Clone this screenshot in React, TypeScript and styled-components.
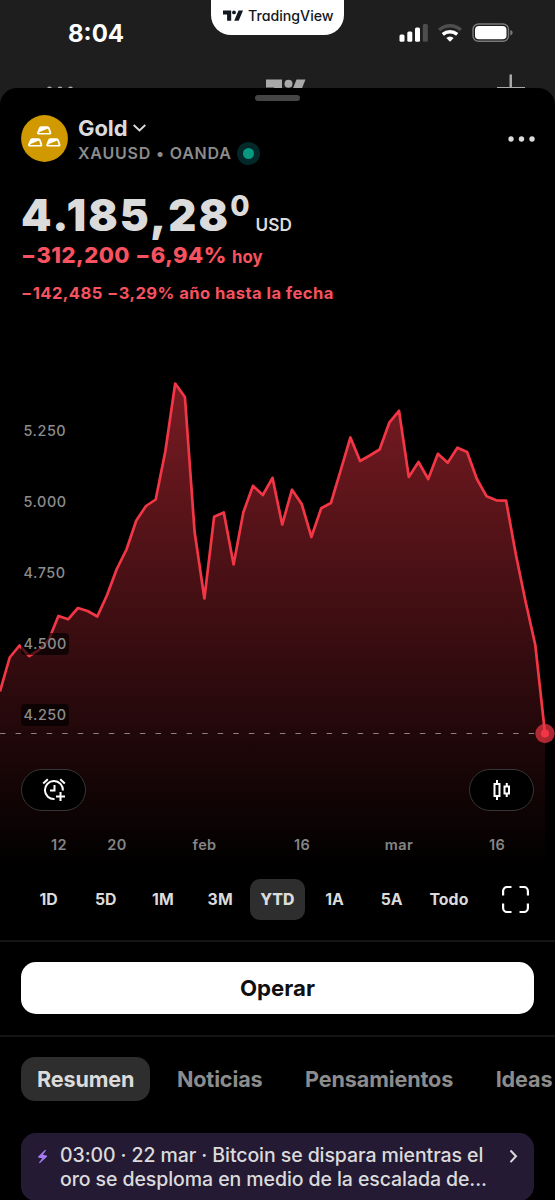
import React from "react";
import styled, { createGlobalStyle } from "styled-components";

const Global = createGlobalStyle`
  * { box-sizing: border-box; }
  html, body { margin: 0; background: #000; }
  body { font-family: Inter, "Liberation Sans", sans-serif; color: #dbdbdb; }
  button { font-family: inherit; color: inherit; border: 0; background: none; padding: 0; margin: 0; }
`;

const Screen = styled.main`
  width: 555px;
  height: 1200px;
  overflow: hidden;
  background: #1e1e1e;
  display: flex;
  flex-direction: column;
`;

const StatusBar = styled.header`
  height: 88px;
  flex: none;
  position: relative;
  display: flex;
  justify-content: space-between;
  align-items: flex-start;
  padding: 0 42px 0 68px;
`;

const Clock = styled.div`
  font-size: 24px;
  line-height: 30px;
  font-weight: 700;
  color: #fff;
  margin-top: 19px;
`;

const BrandPill = styled.div`
  position: absolute;
  left: 211px;
  top: 0;
  width: 133px;
  height: 35px;
  border-radius: 0 0 20px 20px;
  background: #fff;
  color: #131722;
  display: flex;
  align-items: flex-start;
  padding: 8px 0 0 12px;
  gap: 5px;
  font-size: 14.2px;
  line-height: 16px;
  font-weight: 500;
  font-feature-settings: "cv11";
`;

const StatusIcons = styled.svg`
  margin-top: 20px;
  display: block;
`;

const BackdropNav = styled.svg`
  position: absolute;
  left: 0;
  top: 70px;
`;

const Sheet = styled.section`
  flex: 1;
  min-height: 0;
  background: #000;
  border-radius: 17px 17px 0 0;
  display: flex;
  flex-direction: column;
  position: relative;
`;

const Grabber = styled.div`
  flex: none;
  width: 45px;
  height: 6px;
  border-radius: 3px;
  background: #454545;
  margin: 7px auto 14px;
`;

const SymbolRow = styled.div`
  display: flex;
  align-items: center;
  height: 47px;
  padding: 0 20px 0 21px;
  gap: 10px;
`;

const SymbolInfo = styled.div`
  flex: 1;
  display: flex;
  flex-direction: column;
  padding-top: 3px;
`;

const SymbolName = styled.div`
  display: flex;
  align-items: center;
  gap: 6px;
  font-size: 22px;
  line-height: 26px;
  font-weight: 700;
  letter-spacing: -0.1px;
`;

const SymbolMeta = styled.div`
  display: flex;
  align-items: center;
  gap: 5px;
  color: #8c8c8c;
  font-size: 16px;
  line-height: 25px;
  font-weight: 600;
  letter-spacing: 0.8px;
`;

const MarketDot = styled.span`
  width: 23px;
  height: 23px;
  border-radius: 50%;
  background: #04282a;
  display: flex;
  align-items: center;
  justify-content: center;
  &::after {
    content: "";
    width: 11px;
    height: 11px;
    border-radius: 50%;
    background: #089981;
  }
`;

const Quote = styled.div`
  height: 148px;
  padding: 28px 21px 0;
  display: flex;
  flex-direction: column;
`;

const Price = styled.div`
  display: flex;
  align-items: baseline;
  height: 53px;
  font-size: 43.5px;
  line-height: 50px;
  font-weight: 900;
  letter-spacing: 2.1px;
`;

const Fraction = styled.span`
  font-size: 28px;
  line-height: 28px;
  position: relative;
  top: -15px;
  letter-spacing: 0;
  font-weight: 800;
`;

const Currency = styled.span`
  font-size: 17.2px;
  line-height: 24px;
  font-weight: 600;
  letter-spacing: 0;
  margin-left: 6px;
`;

const Change = styled.div<{ $size: number; $line: number; $track: number; $bold?: boolean }>`
  color: #f7525f;
  font-size: ${(p) => p.$size}px;
  line-height: ${(p) => p.$line}px;
  letter-spacing: ${(p) => p.$track}px;
  font-weight: ${(p) => (p.$bold ? 800 : 700)};
  white-space: nowrap;
  small {
    font-size: 16.8px;
    font-weight: 700;
    letter-spacing: 0;
  }
`;

const ChartArea = styled.div`
  position: relative;
  height: 569px;
  svg { display: block; }
`;

const ChartButton = styled.button<{ $side: "left" | "right" }>`
  position: absolute;
  top: 459px;
  ${(p) => p.$side}: 21px;
  width: 65px;
  height: 42px;
  border: 1px solid #363636;
  border-radius: 21px;
  background: #000;
  display: flex;
  align-items: center;
  justify-content: center;
`;

const Ranges = styled.nav`
  display: flex;
  height: 41px;
  padding: 0 26px 0 20px;
  align-items: center;
`;

const Range = styled.button<{ $active?: boolean }>`
  width: 57.2px;
  flex: none;
  display: flex;
  justify-content: center;
  span {
    min-width: 55px;
    height: 41px;
    border-radius: 10px;
    background: ${(p) => (p.$active ? "#2e2e2e" : "transparent")};
    font-size: 15.8px;
    line-height: 41px;
    font-weight: ${(p) => (p.$active ? 800 : 700)};
    letter-spacing: 0.1px;
  }
`;

const FullscreenButton = styled.button`
  margin-left: auto;
  display: flex;
`;

const TradePanel = styled.div`
  margin-top: 20px;
  border: solid #151515;
  border-width: 2px 0;
  padding: 20px 21px 21px;
  height: 97px;
`;

const TradeButton = styled.button`
  width: 100%;
  height: 52px;
  border-radius: 15px;
  background: #fff;
  color: #0f0f0f;
  font-size: 22.2px;
  line-height: 52px;
  font-weight: 700;
  display: block;
`;

const Tabs = styled.nav`
  display: flex;
  margin-top: 20px;
  padding-left: 21px;
  gap: 10.5px;
  overflow: hidden;
  flex: none;
`;

const Tab = styled.button<{ $active?: boolean }>`
  flex: none;
  height: 44px;
  padding: 0 16px;
  border-radius: 14px;
  background: ${(p) => (p.$active ? "#2e2e2e" : "transparent")};
  color: ${(p) => (p.$active ? "#dbdbdb" : "#8c8c8c")};
  font-size: 21.6px;
  line-height: 45px;
  font-weight: 700;
  letter-spacing: -0.13px;
`;

const NewsCard = styled.article`
  flex: none;
  height: 68px;
  margin: 32px 21px 0;
  border-radius: 15px;
  background: #251a34;
  display: flex;
  padding: 10px 16px 0;
  svg { flex: none; }
`;

const NewsText = styled.p`
  margin: 1px 0 0 12px;
  flex: 1;
  font-size: 19.5px;
  line-height: 23.5px;
  font-weight: 500;
  letter-spacing: -0.08px;
  white-space: nowrap;
`;

const STEP = 545 / 56;
const CHART_TOP = 310;
const series = [
  691.5, 657.5, 645.5, 656, 650, 640, 616, 619.3, 608, 611, 616.5, 595, 569, 549.5, 520.5, 506, 499.5, 451, 383.5, 397,
  532, 598.5, 516.8, 512.5, 564.5, 512.5, 485.8, 495, 477.8, 524.6, 489.7, 504, 537, 508.3, 503, 470.7, 437.5, 461,
  455.5, 449.5, 422.7, 410.8, 477, 462, 479, 453.8, 462.8, 447.7, 452, 479, 496.3, 500.3, 500.7, 554.3, 601.3, 645,
  733.3,
];
const points = series.map((y, i) => `${(i * STEP).toFixed(1)},${(y - CHART_TOP).toFixed(1)}`).join(" ");

const priceTicks = [
  { label: "5.250", y: 121 },
  { label: "5.000", y: 192 },
  { label: "4.750", y: 263 },
  { label: "4.500", y: 334, plate: true },
  { label: "4.250", y: 405, plate: true },
];
const dateTicks = [
  { label: "12", x: 59 },
  { label: "20", x: 117 },
  { label: "feb", x: 204.5 },
  { label: "16", x: 302 },
  { label: "mar", x: 399 },
  { label: "16", x: 497 },
];

function PriceChart() {
  return (
    <svg width="555" height="569" viewBox="0 0 555 569">
      <defs>
        <linearGradient id="fill" x1="0" y1="73" x2="0" y2="558" gradientUnits="userSpaceOnUse">
          <stop offset="0" stopColor="#f23645" stopOpacity="0.5" />
          <stop offset="1" stopColor="#f23645" stopOpacity="0" />
        </linearGradient>
      </defs>
      <polygon points={`0,558 ${points} 545,558`} fill="url(#fill)" />
      <polyline points={points} fill="none" stroke="#f23645" strokeWidth="2.7" strokeLinejoin="round" />
      <line x1="0" x2="537" y1="423.5" y2="423.5" stroke="#8c8080" strokeWidth="1" strokeDasharray="5.5 10.05" />
      <circle cx="545" cy="423.5" r="9.7" fill="#f23645" fillOpacity="0.7" />
      <circle cx="545" cy="423.5" r="4" fill="#f23645" />
      {priceTicks.map((t) => (
        <g key={t.label}>
          {t.plate && <rect x="21" y={t.y - 11} width="48" height="22" rx="4" fill="#000" fillOpacity="0.65" />}
          <text x="23.5" y={t.y + 5.4} fontSize="14.4" fontWeight="500" letterSpacing="0.55" fill="#8c8c8c">
            {t.label}
          </text>
        </g>
      ))}
      {dateTicks.map((t) => (
        <text key={t.x} x={t.x} y="540.4" fontSize="14.5" fontWeight="600" letterSpacing="0.4" textAnchor="middle" fill="#858585">
          {t.label}
        </text>
      ))}
    </svg>
  );
}

const ingots = [
  [15.8, 11],
  [6.8, 23],
  [25, 23],
];

function GoldIcon() {
  return (
    <svg width="47" height="47" viewBox="0 0 47 47">
      <circle cx="23.5" cy="23.5" r="23.4" fill="#d19900" />
      {ingots.map(([x, y]) => (
        <g key={x}>
          <path d={`M${x + 4.2} ${y + 1}h6.600q1 0 1.300 1l1.600 4.600q.3 1.200-.9 1.200H${x + 2}q-1.300 0-.9-1.200l1.800-4.600q.3-1 1.300-1z`} fill="#fff" stroke="#fff" strokeWidth="1.500" strokeLinejoin="round" />
          <path d={`M${x + 2.4} ${y + 7}l.3-.9 8-3.300q.5-.2.700.4l1.100 3.300q.1.500-.4.500z`} fill="#d19900" />
        </g>
      ))}
    </svg>
  );
}

export default function App() {
  return (
    <Screen>
      <Global />
      <StatusBar>
        <Clock>8:04</Clock>
        <BrandPill>
          <svg width="20" height="16" viewBox="0 0 20 16" fill="#131722">
            <path d="M0 2.500h8.200v10.300H4.100V6.500H0z" />
            <circle cx="11" cy="4.400" r="1.900" />
            <path d="M15.500 2.500h4.500l-4.300 10.300h-4.500z" />
          </svg>
          TradingView
        </BrandPill>
        <StatusIcons width="114" height="26" viewBox="399 20 114 26">
          <g fill="#fff">
            <rect x="399.500" y="34.500" width="5" height="7.300" rx="1.500" />
            <rect x="407.300" y="31.500" width="5" height="10.300" rx="1.500" />
            <rect x="415" y="27.500" width="5" height="14.300" rx="1.500" />
            <rect x="422.800" y="24" width="5" height="17.800" rx="1.500" fill="#4e4e4e" />
          </g>
          <path d="M439.200 30a16 16 0 0 1 21.600 0" fill="none" stroke="#4e4e4e" strokeWidth="3.600" />
          <path d="M442.800 34.400a11.200 11.200 0 0 1 14.400 0" fill="none" stroke="#fff" strokeWidth="3.400" />
          <path d="M446.300 38a5.800 5.800 0 0 1 7.400 0L450 41.800z" fill="#fff" />
          <rect x="473" y="24" width="35.500" height="17.300" rx="5.500" fill="none" stroke="#7a7a7a" strokeWidth="1.400" />
          <rect x="475" y="26" width="31.500" height="13.300" rx="3.800" fill="#fff" />
          <path d="M510.300 30v5.500q2.400-.8 2.400-2.750t-2.400-2.750z" fill="#7a7a7a" />
        </StatusIcons>
        <BackdropNav width="555" height="36" viewBox="0 70 555 36" fill="#a9a9a9">
          <circle cx="49.500" cy="89" r="2.500" />
          <circle cx="60" cy="89" r="2.500" />
          <circle cx="70.500" cy="89" r="2.500" />
          <path d="M266 79.500h16v20h-8v-12h-8z" />
          <circle cx="288.500" cy="83.700" r="4" />
          <path d="M296.500 79.500h9l-8 20h-9z" />
          <path d="M509.500 74.500h2.500v12.500h13v2h-28v-2h12.500z" />
        </BackdropNav>
      </StatusBar>
      <Sheet>
        <Grabber />
        <SymbolRow>
          <GoldIcon />
          <SymbolInfo>
            <SymbolName>
              Gold
              <svg width="13" height="8" viewBox="0 0 13 8" fill="none" stroke="#dbdbdb" strokeWidth="1.900">
                <path d="M.7 1l5.800 5.400L12.300 1" />
              </svg>
            </SymbolName>
            <SymbolMeta>
              XAUUSD • OANDA <MarketDot />
            </SymbolMeta>
          </SymbolInfo>
          <svg width="27" height="6" viewBox="0 0 27 6" fill="#dbdbdb">
            <circle cx="3" cy="3" r="2.700" />
            <circle cx="13.500" cy="3" r="2.700" />
            <circle cx="24" cy="3" r="2.700" />
          </svg>
        </SymbolRow>
        <Quote>
          <Price>
            4.185,28<Fraction>0</Fraction>
            <Currency>USD</Currency>
          </Price>
          <Change $size={22} $line={31} $track={0.45} $bold>
            −312,200 −6,94% <small>hoy</small>
          </Change>
          <Change $size={16.6} $line={41} $track={0.43}>
            −142,485 −3,29% año hasta la fecha
          </Change>
        </Quote>
        <ChartArea>
          <PriceChart />
          <ChartButton $side="left">
            <svg width="24" height="24" viewBox="0 0 24 24" fill="none" stroke="#fff" strokeWidth="2">
              <path d="M20.900 12.500A9 9 0 1 0 12.500 21M12.500 7v5.500H8M1.200 5.500l4.600-4.200M18.200 1.300l4.600 4.200M18.500 14v9M14 18.500h9" />
            </svg>
          </ChartButton>
          <ChartButton $side="right">
            <svg width="18" height="20" viewBox="0 0 18 20" fill="none" stroke="#fff" strokeWidth="2">
              <path d="M1.500 4h5v12h-5zM4 0v4M4 16v4M11.500 6.500h4.500v7h-4.500zM13.750 3v3.500M13.750 13.500v3.500" />
            </svg>
          </ChartButton>
        </ChartArea>
        <Ranges>
          {["1D", "5D", "1M", "3M", "YTD", "1A", "5A", "Todo"].map((r) => (
            <Range key={r} $active={r === "YTD"}>
              <span>{r}</span>
            </Range>
          ))}
          <FullscreenButton>
            <svg width="27" height="27" viewBox="0 0 27 27" fill="none" stroke="#fff" strokeWidth="2.200">
              <path d="M1.100 9.500V5a4 4 0 0 1 4-4h4.400M17.500 1h4.400a4 4 0 0 1 4 4v4.500M25.900 17.500V22a4 4 0 0 1-4 4h-4.400M9.500 26H5.100a4 4 0 0 1-4-4v-4.500" />
            </svg>
          </FullscreenButton>
        </Ranges>
        <TradePanel>
          <TradeButton>Operar</TradeButton>
        </TradePanel>
        <Tabs>
          <Tab $active>Resumen</Tab>
          <Tab>Noticias</Tab>
          <Tab>Pensamientos</Tab>
          <Tab>Ideas</Tab>
        </Tabs>
        <NewsCard>
          <svg width="11" height="26" viewBox="0 0 11 26" fill="#a27cf0">
            <path d="M8.200 6.800L1 13.700l.5 1 3.800.500L2 19.500l.8.700 7.400-6.800-.5-1-3.800-.600L9 7.500z" />
          </svg>
          <NewsText>
            03:00 · 22 mar · Bitcoin se dispara mientras el
            <br />
            oro se desploma en medio de la escalada de...
          </NewsText>
          <svg width="9" height="26" viewBox="0 0 9 26" fill="none" stroke="#dbdbdb" strokeWidth="2">
            <path d="M1.500 7.500L7 13.300l-5.500 5.800" />
          </svg>
        </NewsCard>
      </Sheet>
    </Screen>
  );
}
